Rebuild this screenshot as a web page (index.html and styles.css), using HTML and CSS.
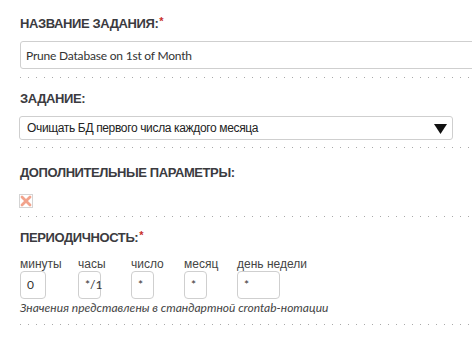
FILE: index.html
```html
<!DOCTYPE html>
<html lang="ru">
<head>
    <meta charset="UTF-8">
    <meta name="viewport" content="width=device-width, initial-scale=1.0">
    <title>Задание</title>
    <link rel="stylesheet" href="styles.css">
</head>
<body>
    <form class="task-form">
        <div class="field field-name">
            <h3 class="field-title">Название задания:<span class="req">*</span></h3>
            <div class="text-input">Prune Database on 1st of Month</div>
        </div>
        <div class="field field-task">
            <h3 class="field-title">Задание:</h3>
            <div class="select-box">
                <span>Очищать БД первого числа каждого месяца</span>
                <svg class="arrow" width="13" height="10" viewBox="0 0 13 10"><polygon points="0,0 13,0 6.5,10" fill="#111"/></svg>
            </div>
        </div>
        <div class="field field-extra">
            <h3 class="field-title">Дополнительные параметры:</h3>
            <svg class="x-box" width="14" height="14" viewBox="0 0 14 14">
                <rect x="0.5" y="0.5" width="13" height="13" fill="#fff" stroke="#d4d4d4"/>
                <path d="M3 3 L11 11 M11 3 L3 11" stroke="#f2a38c" stroke-width="2.8" stroke-linecap="round"/>
            </svg>
        </div>
        <div class="field field-period">
            <h3 class="field-title">Периодичность:<span class="req">*</span></h3>
            <div class="cron">
                <div class="cron-col col-min">
                    <label>минуты</label>
                    <div class="cron-input w26">0</div>
                </div>
                <div class="cron-col">
                    <label>часы</label>
                    <div class="cron-input w23">*/1</div>
                </div>
                <div class="cron-col">
                    <label>число</label>
                    <div class="cron-input w23">*</div>
                </div>
                <div class="cron-col">
                    <label>месяц</label>
                    <div class="cron-input w23">*</div>
                </div>
                <div class="cron-col col-last">
                    <label>день недели</label>
                    <div class="cron-input w43">*</div>
                </div>
            </div>
            <p class="note">Значения представлены в стандартной crontab-нотации</p>
        </div>
    </form>
</body>
</html>
```

FILE: styles.css
```css
html,body{
    margin:0;
    padding:0;
    background:#fff;
    overflow:hidden;
}
.task-form{
    width:480px;
    padding:16px 0 0 20px;
    color:#333;
}
.field{
    display:flex;
    flex-direction:column;
    align-items:flex-start;
}
.field::after{
    content:'';
    display:block;
    width:100%;
    height:1px;
    background:repeating-linear-gradient(to right, #a9a9a9 0 1px, transparent 1px 8px);
}
.field-title{
    margin:0;
    font-family:"Liberation Sans", Arial, sans-serif;
    font-size:13px;
    font-weight:bold;
    letter-spacing:-0.4px;
    line-height:16px;
    text-transform:uppercase;
    color:#3b3b3f;
}
.req{
    color:#c9302c;
    font-size:11px;
    vertical-align:top;
    line-height:11px;
    margin-left:1px;
}

/* название */
.text-input{
    box-sizing:border-box;
    width:470px;
    height:28px;
    margin:9px 0 8px;
    padding:0 5px;
    border:1px solid #cfcfcf;
    border-radius:3px;
    font-family:Lato, sans-serif;
    font-size:12px;
    letter-spacing:-0.2px;
    line-height:27px;
    color:#333;
}

/* задание */
.field-task,
.field-period{margin-top:13px}
.select-box{
    box-sizing:border-box;
    width:434px;
    height:24px;
    margin:9px 0 7px -1px;
    padding:0 5px 0 7px;
    border:1px solid #cfcfcf;
    border-radius:3px;
    display:flex;
    align-items:center;
    justify-content:space-between;
    font-family:"Liberation Sans", Arial, sans-serif;
    font-size:12px;
    letter-spacing:-0.35px;
    color:#222;
}
.arrow{margin-top:1px}

/* доп параметры */
.field-extra{margin-top:17px}
.x-box{
    display:block;
    margin:13px 0 8px -1px;
}

/* периодичность */
.cron{
    display:flex;
    margin-top:11px;
}
.cron-col{
    width:53px;
    display:flex;
    flex-direction:column;
    align-items:flex-start;
}
.cron-col.col-min{width:58px}
.cron-col.col-last{width:auto}
.cron-col label{
    font-family:"Liberation Sans", Arial, sans-serif;
    font-size:12px;
    line-height:14px;
    white-space:nowrap;
    color:#444;
}
.cron-input{
    box-sizing:border-box;
    height:28px;
    padding:0 6px;
    border:1px solid #cfcfcf;
    border-radius:4px;
    font-family:Lato, sans-serif;
    font-size:12px;
    line-height:26px;
    color:#333;
}
.w26{width:26px}
.w23{width:23px}
.w43{width:43px}
.note{
    margin:2px 0 9px;
    font-family:Lato, sans-serif;
    font-style:italic;
    font-size:12px;
    line-height:14px;
    color:#444;
}
```
